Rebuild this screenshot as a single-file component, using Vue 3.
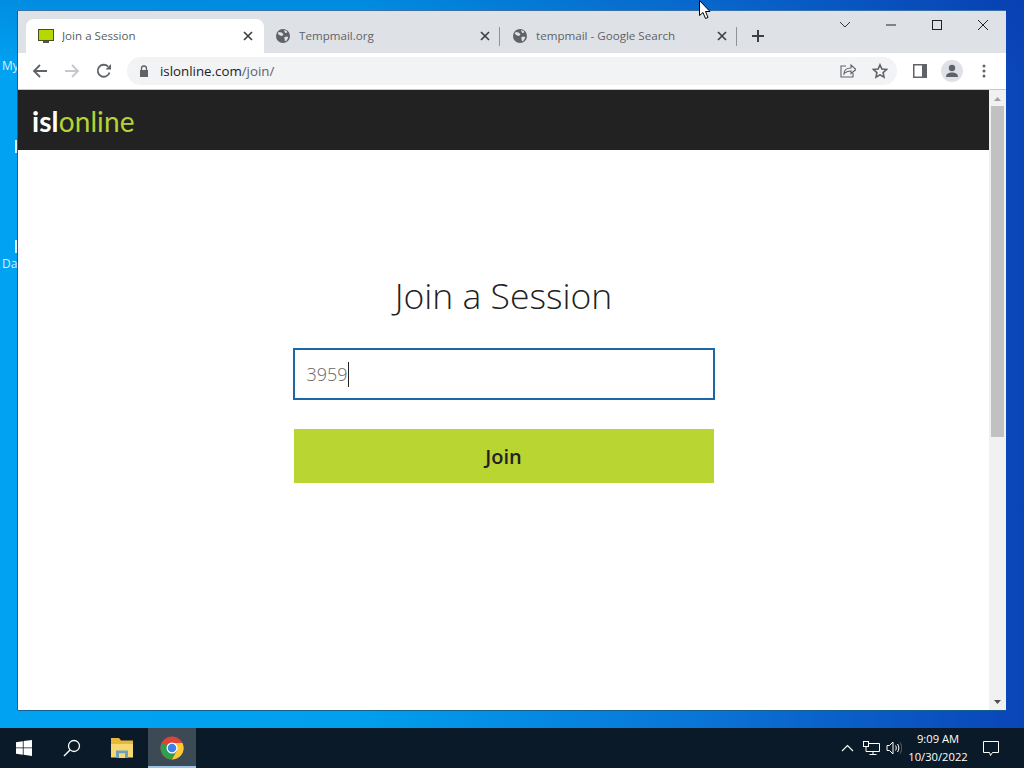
<script setup>
const tabs = [
  { title: 'Tempmail.org' },
  { title: 'tempmail - Google Search' },
]
</script>

<template>
  <div class="desktop">
    <span class="desk-label my">My</span>
    <span class="desk-label da">Da</span>
    <span class="desk-tick t1"></span>
    <span class="desk-tick t2"></span>

    <main class="area">
      <section class="window">
        <div class="tabstrip">
          <div class="tab active">
            <svg class="favicon" width="16" height="14" viewBox="0 0 16 14">
              <rect x="0.5" y="0.5" width="15" height="11" fill="#b5d900" stroke="#4a4f20"/>
              <rect x="5" y="12" width="6" height="2" fill="#555"/>
            </svg>
            <span class="tab-title">Join a Session</span>
            <svg class="tab-x" width="10" height="10" viewBox="0 0 10 10"><path d="M1 1l8 8M9 1l-8 8" stroke="#3c4043" stroke-width="1.7"/></svg>
          </div>
          <div v-for="t in tabs" :key="t.title" class="tab">
            <svg class="globe" width="14" height="14" viewBox="0 0 16 16">
              <circle cx="8" cy="8" r="8" fill="#5f6368"/>
              <path d="M3 3.5l3.5.5 2 2-1.500 2-2.500-.5-2.500-2zM9 1.500l3 .5 1 2-2.500.5zM9.500 9l3.500-.5 1 1.500-2.500 4-1.500-.5z" fill="#dee1e6"/>
            </svg>
            <span class="tab-title">{{ t.title }}</span>
            <svg class="tab-x" width="10" height="10" viewBox="0 0 10 10"><path d="M1 1l8 8M9 1l-8 8" stroke="#3c4043" stroke-width="1.7"/></svg>
            <i class="tab-sep"></i>
          </div>
          <svg class="newtab" width="14" height="14" viewBox="0 0 14 14"><path d="M7 1v12M1 7h12" stroke="#3c4043" stroke-width="2"/></svg>
          <div class="winctl">
            <svg width="46" height="12" viewBox="0 0 46 12"><path d="M18 3l5 5 5-5" fill="none" stroke="#333" stroke-width="1"/></svg>
            <svg width="46" height="12" viewBox="0 0 46 12"><path d="M18 6h10" stroke="#222" stroke-width="1"/></svg>
            <svg width="46" height="12" viewBox="0 0 46 12"><rect x="18.500" y="1.500" width="9" height="9" fill="none" stroke="#222"/></svg>
            <svg width="46" height="12" viewBox="0 0 46 12"><path d="M18 1l10 10M28 1l-10 10" stroke="#222" stroke-width="1"/></svg>
          </div>
        </div>

        <div class="toolbar">
          <svg width="16" height="16" viewBox="0 0 16 16"><path d="M15 8H2M8 2L2 8l6 6" fill="none" stroke="#5f6368" stroke-width="1.800"/></svg>
          <svg width="16" height="16" viewBox="0 0 16 16"><path d="M1 8h13M8 2l6 6-6 6" fill="none" stroke="#c4c7cc" stroke-width="1.800"/></svg>
          <svg width="16" height="16" viewBox="0 0 16 16"><path d="M13.500 9.500A6 6 0 1 1 12 3.500" fill="none" stroke="#5f6368" stroke-width="1.800"/><path d="M9.500 6.500H15V1z" fill="#5f6368"/></svg>
          <div class="omnibox">
            <svg width="10" height="12" viewBox="0 0 10 12"><path d="M2.500 5V3.500a2.500 2.500 0 0 1 5 0V5" fill="none" stroke="#5f6368" stroke-width="1.300"/><rect x="1" y="5" width="8" height="7" fill="#5f6368"/></svg>
            <span class="url">islonline.com<span class="url-dim">/join/</span></span>
            <span class="omni-right">
              <svg width="16" height="16" viewBox="0 0 16 16"><path d="M6 3H1v11h12v-4" fill="none" stroke="#5f6368" stroke-width="1.100"/><path d="M4 11c0-4 3-6 7-6V2l5 4.500-5 4V8c-3 0-5 .5-7 3z" fill="none" stroke="#5f6368" stroke-width="1.100"/></svg>
              <svg width="16" height="16" viewBox="0 0 16 16"><path d="M8 1.800l1.900 4.200 4.600.5-3.400 3.100.9 4.500L8 11.800l-4 2.300.9-4.500L1.500 6.500 6.100 6z" fill="none" stroke="#5f6368" stroke-width="1.600"/></svg>
            </span>
          </div>
          <svg class="panel-ic" width="14" height="14" viewBox="0 0 14 14"><path d="M0 0h14v14H0z" fill="#5f6368"/><rect x="1.500" y="1.500" width="7.500" height="11" fill="#fff"/></svg>
          <span class="avatar">
            <svg width="14" height="14" viewBox="0 0 14 14"><circle cx="7" cy="4" r="3.200" fill="#5f6368"/><path d="M1 13c0-3.500 3-4.500 6-4.500s6 1 6 4.500z" fill="#5f6368"/></svg>
          </span>
          <svg class="dots" width="4" height="14" viewBox="0 0 4 14"><circle cx="2" cy="2" r="1.500" fill="#5f6368"/><circle cx="2" cy="7" r="1.500" fill="#5f6368"/><circle cx="2" cy="12" r="1.500" fill="#5f6368"/></svg>
        </div>

        <div class="viewport">
          <div class="page">
            <header class="site-head">
              <span class="logo"><span class="logo-w">isl</span><span class="logo-g">online</span></span>
            </header>
            <div class="join">
              <h1>Join a Session</h1>
              <div class="field"><span class="value">3959</span><i class="caret"></i></div>
              <button class="join-btn">Join</button>
            </div>
          </div>
          <div class="scrollbar">
            <svg width="17" height="16" viewBox="0 0 17 16"><path d="M5 11l3.500-4 3.500 4z" fill="#a3a3a3"/></svg>
            <div class="track"><div class="thumb"></div></div>
            <svg width="17" height="16" viewBox="0 0 17 16"><path d="M5 6l3.500 4 3.500-4z" fill="#505050"/></svg>
          </div>
        </div>
      </section>
    </main>

    <footer class="taskbar">
      <div class="task-left">
        <span class="task-cell">
          <svg width="16" height="16" viewBox="0 0 16 16"><path d="M0 2.200l6.800-1v6.300H0zM7.600 1.100L16 0v7.500H7.600zM0 8.300h6.800v6.400l-6.800-1zM7.600 8.300H16V16l-8.400-1.200z" fill="#fff"/></svg>
        </span>
        <span class="task-cell">
          <svg width="18" height="18" viewBox="0 0 18 18"><circle cx="11" cy="7" r="5.500" fill="none" stroke="#fff" stroke-width="1.300"/><path d="M7 11l-6 6" stroke="#fff" stroke-width="1.500"/></svg>
        </span>
        <span class="task-cell">
          <svg width="22" height="20" viewBox="0 0 22 20"><path d="M0 0h8l2 2.500h12V19H0z" fill="#e9b83a"/><path d="M0 6h22v13.500H0z" fill="#f7d873"/><path d="M5 20v-7.500h12V20h-3v-4.500H8V20z" fill="#6f9fbf"/><path d="M8 15.500h6V20H8z" fill="#f7d873"/></svg>
        </span>
        <span class="task-cell chrome">
          <svg width="24" height="24" viewBox="0 0 48 48">
            <circle cx="24" cy="24" r="23" fill="#db4437"/>
            <path d="M24 24L3.500 13.500A23 23 0 0 0 24 47l10-18z" fill="#2e9e4f"/>
            <path d="M24 14h21a23 23 0 0 1-21 33l10-18z" fill="#fcc934"/>
            <circle cx="24" cy="24" r="11" fill="#fff"/>
            <circle cx="24" cy="24" r="8.500" fill="#3f7fe8"/>
          </svg>
        </span>
      </div>
      <div class="tray">
        <svg width="13" height="8" viewBox="0 0 13 8"><path d="M1 7l5.500-5.500L12 7" fill="none" stroke="#fff" stroke-width="1.100"/></svg>
        <svg width="17" height="14" viewBox="0 0 17 14"><path d="M5 2.500h11.500v8H5M10 10.500v3M6.500 13.500h7" fill="none" stroke="#fff"/><rect x="0.500" y="0.500" width="5" height="5" fill="#0b1a28" stroke="#fff"/><path d="M3 5.500v5h2" fill="none" stroke="#fff"/></svg>
        <svg width="16" height="14" viewBox="0 0 16 14"><path d="M1 4.500h2.500L7 1v12L3.500 9.500H1z" fill="none" stroke="#fff"/><path d="M9.500 4.500c1 1.500 1 3.500 0 5M11.500 3c1.800 2.500 1.800 5.500 0 8" fill="none" stroke="#fff"/><path d="M14 1.500c2.300 3.300 2.300 7.700 0 11" fill="none" stroke="#667"/></svg>
        <div class="clock"><span>9:09 AM</span><span>10/30/2022</span></div>
        <svg class="notif" width="16" height="15" viewBox="0 0 16 15"><path d="M.5.500h15v11H9.500l-2 3-1-3h-6z" fill="none" stroke="#fff"/></svg>
      </div>
    </footer>

    <svg class="cursor" width="12" height="20" viewBox="0 0 12 20"><path d="M.5.500v15l3.500-3 2.500 6 2.500-1-2.500-6h4.500z" fill="#fff" stroke="#000"/></svg>
  </div>
</template>

<style>
html, body { margin: 0; padding: 0; overflow: hidden; }
</style>

<style scoped>
.desktop {
  position: relative;
  width: 1024px;
  height: 768px;
  overflow: hidden;
  display: flex;
  flex-direction: column;
  font-family: "Open Sans", "Noto Sans", sans-serif;
  background:
    linear-gradient(180deg, rgba(0, 40, 150, 0.18), rgba(0, 40, 150, 0) 70px),
    linear-gradient(90deg, #00a3f2 0%, #00a0ee 35%, #0a72d6 70%, #0a45b8 100%);
}
.desk-label { position: absolute; left: 2px; font-size: 12px; color: #d5f0ff; line-height: 14px; }
.my { top: 59px; }
.da { top: 257px; }
.desk-tick { position: absolute; left: 15px; width: 3px; height: 13px; background: #d5f0ff; }
.t1 { top: 140px; }
.t2 { top: 240px; }
.area { flex: 1; padding: 11px 18px 18px; min-height: 0; }
.window {
  position: relative;
  height: 699px;
  display: flex;
  flex-direction: column;
  background: #fff;
  box-shadow: -1px 0 0 #12608f, 0 1px 0 #12608f, 0 -1px 0 #3a70a8;
}
.tabstrip {
  height: 42px;
  flex: none;
  display: flex;
  align-items: flex-end;
  padding-left: 8px;
  background: #dee1e6;
  box-sizing: border-box;
}
.tab {
  position: relative;
  width: 238px;
  height: 34px;
  flex: none;
  box-sizing: border-box;
  display: flex;
  align-items: center;
  padding: 0 11px 0 12px;
  gap: 9px;
  font-size: 11.6px;
  color: #5f6368;
}
.tab + .tab { width: 237px; }
.tab.active { background: #fff; border-radius: 8px 8px 0 0; gap: 8px; color: #5a5e63; }
.favicon { flex: none; }
.globe { flex: none; }
.tab-title { flex: 1; white-space: nowrap; overflow: hidden; margin-bottom: 2px; }
.tab-x { flex: none; }
.tab-sep { position: absolute; right: 1px; top: 8px; width: 1px; height: 19px; background: #8f9296; }
.newtab { flex: none; margin: 0 0 10px 13px; }
.winctl {
  position: absolute;
  top: 8px;
  right: 0;
  display: flex;
}
.toolbar {
  height: 37px;
  flex: none;
  display: flex;
  align-items: center;
  padding-left: 14px;
  box-sizing: border-box;
  gap: 16px;
  background: #fff;
  border-bottom: 1px solid #c9c9c9;
}
.omnibox {
  width: 770px;
  margin-left: -1px;
  height: 28px;
  border-radius: 14px;
  background: #f1f3f4;
  display: flex;
  align-items: center;
  padding: 0 0 0 12px;
  box-sizing: border-box;
  gap: 11px;
  font-size: 13.3px;
  color: #202124;
}
.url-dim { color: #5f6368; }
.omni-right { margin-left: auto; display: flex; gap: 16px; padding-right: 9px; }
.panel-ic { margin-left: 0; }
.avatar {
  width: 22px;
  height: 22px;
  margin-left: -2px;
  border-radius: 50%;
  background: #dfe1e7;
  display: flex;
  align-items: center;
  justify-content: center;
}
.dots { margin-left: 3px; }
.viewport { flex: 1; display: flex; min-height: 0; }
.page { flex: 1; display: flex; flex-direction: column; background: #fff; }
.site-head {
  height: 60px;
  flex: none;
  box-sizing: border-box;
  background: #222222;
  display: flex;
  align-items: center;
  padding: 2px 0 0 14px;
}
.logo { font-family: Lato, sans-serif; font-size: 28px; line-height: 30px; letter-spacing: 0.1px; font-weight: 400; }
.logo-w { color: #fff; font-weight: 700; }
.logo-g { color: #b5d334; }
.join {
  width: 422px;
  margin: 0 auto;
  padding: 122px 0 0;
  display: flex;
  flex-direction: column;
  align-items: stretch;
}
h1 {
  margin: 0 0 30px;
  font-size: 35.500px;
  line-height: 46px;
  font-weight: 300;
  color: #222;
  text-align: center;
}
.field {
  height: 52px;
  box-sizing: border-box;
  border: 2px solid #1a68a8;
  display: flex;
  align-items: center;
  padding-left: 12px;
  font-size: 18px;
  font-weight: 300;
  color: #666;
}
.caret { width: 1px; height: 25px; background: #222; }
.join-btn {
  height: 54px;
  margin: 29px 1px 0;
  border: 0;
  background: #b9d532;
  color: #222;
  font: 600 20px "Open Sans", sans-serif;
  padding: 1px 0 0;
}
.scrollbar { width: 17px; flex: none; background: #f1f1f1; display: flex; flex-direction: column; }
.scrollbar svg { flex: none; }
.track { flex: 1; padding: 0 2px; }
.thumb { height: 331px; background: #c1c1c1; }
.taskbar {
  height: 40px;
  flex: none;
  display: flex;
  justify-content: space-between;
  background: #0a1a28;
}
.task-left { display: flex; }
.task-cell { width: 48px; display: flex; align-items: center; justify-content: center; }
.task-cell:nth-child(3) { width: 52px; }
.chrome { background: #3c4a55; box-shadow: inset 0 -2px 0 #9cc3e6; }
.tray { display: flex; align-items: center; color: #fff; padding-right: 25px; }
.tray svg:nth-child(1) { margin-right: 9px; margin-top: -1px; }
.tray svg:nth-child(2) { margin-right: 6px; }
.clock {
  display: flex;
  flex-direction: column;
  align-items: center;
  margin: 0 15px 0 6px;
  font-size: 11.2px;
  line-height: 18px;
  width: 60px;
  white-space: nowrap;
}
.cursor { position: absolute; left: 699px; top: 0; }
</style>
